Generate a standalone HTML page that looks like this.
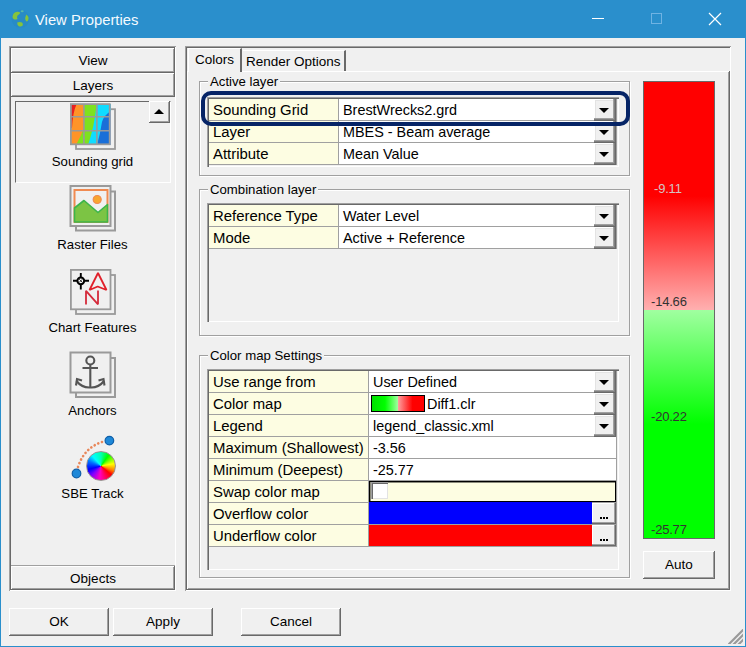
<!DOCTYPE html>
<html><head><meta charset="utf-8">
<style>
*{box-sizing:border-box;margin:0;padding:0}
html,body{width:746px;height:647px;overflow:hidden;background:#f0f0f0;font-family:"Liberation Sans",sans-serif;color:#000}
.a{position:absolute}
.raised{background:#f0f0f0;box-shadow:inset -1px -1px #696969,inset 1px 1px #fff,inset -2px -2px #a0a0a0}
.sunken{box-shadow:inset 1px 1px #a0a0a0,inset -1px -1px #fff,inset 2px 2px #696969}
.t13{font-size:13.5px;line-height:16px;white-space:nowrap}
.t15{font-size:14.8px;line-height:18px;white-space:nowrap}
.ctr{text-align:center}
.gb{border:1px solid #a0a0a0;box-shadow:1px 1px #fff,inset 1px 1px #fff}
.gl{position:absolute;background:#f0f0f0;padding:0 2px 0 2px;font-size:13.2px;line-height:16px;white-space:nowrap}
.grid{position:absolute;background:#f0f0f0}
.row{position:absolute;height:22px}
.lab{background:#fdfde2;border-bottom:1px solid #a0a0a0;border-right:1px solid #a0a0a0;padding-left:4px;font-size:14.9px;white-space:nowrap;overflow:hidden}
.val{background:#fff;border-bottom:1px solid #a0a0a0;border-right:1px solid #a0a0a0;padding-left:4px;font-size:14.4px;white-space:nowrap;overflow:hidden}
.dd{background:#f0f0f0;box-shadow:inset -1px -1px #696969,inset -2px -2px #808080,inset -3px -3px #a0a0a0,inset 1px 1px #fff,inset 2px 2px #e3e3e3}
.tri{position:absolute;left:5px;width:0;height:0;border-left:5px solid transparent;border-right:5px solid transparent;border-top:5px solid #000}
.dotb{background:#f0f0f0;box-shadow:inset -1px -1px #696969,inset -2px -2px #a0a0a0,inset 1px 1px #fff}
.dotb i{position:absolute;left:8px;top:14px;width:2px;height:2px;background:#000;box-shadow:3px 0 #000,6px 0 #000}
.sw{display:inline-block;vertical-align:top;margin-top:2px;margin-left:-2px;margin-right:2px;width:54px;height:17px;border:1px solid #000;background:linear-gradient(90deg,#00e000 0%,#00ff00 25%,#a0ffa0 50%,#ffa0a0 50%,#ff0000 78%,#ff0000 100%)}
</style></head><body>
<!-- window border -->
<div class="a" style="left:0;top:0;width:746px;height:647px;border:1px solid #2a8fcc;border-top:0"></div>
<!-- title bar -->
<div class="a" style="left:0;top:0;width:746px;height:38px;background:#2a8fcc"></div>
<svg class="a" style="left:10px;top:8px" width="22" height="22" viewBox="10 8 22 22">
<circle cx="20.5" cy="18.8" r="9" fill="#288bc6"/>
<path d="M12.5 16.5 Q13 12.5 17 11.8 Q19.5 11.5 20.3 13 Q19 14.5 17.5 15.5 Q16.5 17 17.5 19 Q15 20 13.5 19 Q12.3 18 12.5 16.5 Z" fill="#86c43c"/>
<ellipse cx="22.2" cy="11.3" rx="1.5" ry="1" fill="#5ab8a8"/>
<path d="M26.5 14.5 Q28.8 16.5 28.5 19 Q28 21.5 26.5 21.5 Q25 20.5 25.2 18 Q25.5 16 26.5 14.5 Z" fill="#86c43c"/>
<path d="M17.2 22.5 Q19.5 21.3 22 22.5 Q23.5 24 22.5 25.8 Q20.5 27.2 18.5 26 Q17 24.5 17.2 22.5 Z" fill="#86c43c"/>
</svg>
<div class="a" style="left:35px;top:11px;font-size:14.8px;line-height:18px;color:#f4faff">View Properties</div>
<div class="a" style="left:592px;top:18px;width:12px;height:1px;background:#fff"></div>
<div class="a" style="left:651px;top:13px;width:11px;height:11px;border:1px solid #6fb3e3"></div>
<svg class="a" style="left:708px;top:12px" width="14" height="14" viewBox="0 0 14 14"><path d="M1 1 L13 13 M13 1 L1 13" stroke="#fff" stroke-width="1.2"/></svg>

<!-- left panel -->
<div class="a sunken" style="left:9px;top:46px;width:167px;height:545px"></div>
<div class="a raised t13 ctr" style="left:11px;top:48px;width:164px;height:25px;padding-top:5px">View</div>
<div class="a raised t13 ctr" style="left:11px;top:73px;width:164px;height:24px;padding-top:5px">Layers</div>
<div class="a" style="left:11px;top:565px;width:164px;height:1px;background:#a0a0a0"></div>
<div class="a raised t13 ctr" style="left:11px;top:566px;width:164px;height:24px;padding-top:5px">Objects</div>
<!-- selected item frame -->
<div class="a" style="left:15px;top:101px;width:156px;height:82px;border-top:1px solid #696969;border-left:1px solid #696969;border-right:1px solid #fff;border-bottom:1px solid #fff"></div>
<div class="a raised" style="left:149px;top:101px;width:21px;height:22px"></div>
<div class="a" style="left:153.5px;top:109px;width:0;height:0;border-left:5px solid transparent;border-right:5px solid transparent;border-bottom:5px solid #000"></div>

<div class="a t13 ctr" style="left:10px;top:154px;width:165px;font-size:13.2px">Sounding grid</div>
<div class="a t13 ctr" style="left:10px;top:237px;width:165px;font-size:13.2px">Raster Files</div>
<div class="a t13 ctr" style="left:10px;top:320px;width:165px;font-size:13.2px">Chart Features</div>
<div class="a t13 ctr" style="left:10px;top:403px;width:165px;font-size:13.2px">Anchors</div>
<div class="a t13 ctr" style="left:10px;top:486px;width:165px;font-size:13.2px">SBE Track</div>

<!-- right tab control -->
<div class="a sunken" style="left:185px;top:46px;width:546px;height:545px"></div>
<div class="a raised" style="left:187px;top:71px;width:543px;height:519px"></div>
<!-- tabs -->
<div class="a" style="left:188px;top:48px;width:54px;height:24px;background:#f0f0f0;border-left:1px solid #fff;border-top:1px solid #fff;border-right:2px solid #696969"></div>
<div class="a t13" style="left:195px;top:52px">Colors</div>
<div class="a" style="left:243px;top:50px;width:103px;height:21px;border-top:1px solid #fff;border-right:2px solid #696969"></div>
<div class="a t13" style="left:246px;top:54px">Render Options</div>

<!-- group boxes -->
<div class="a gb" style="left:199px;top:81px;width:431px;height:95px"></div>
<div class="gl" style="left:208px;top:74px">Active layer</div>
<div class="a gb" style="left:199px;top:189px;width:431px;height:147px"></div>
<div class="gl" style="left:208px;top:182px">Combination layer</div>
<div class="a gb" style="left:199px;top:355px;width:431px;height:223px"></div>
<div class="gl" style="left:208px;top:348px">Color map Settings</div>

<!-- GRIDS -->
<div class="a" style="left:207px;top:97px;width:412px;height:70px;background:#f0f0f0;box-shadow:inset 1px 1px #a0a0a0,inset 2px 2px #696969,inset -1px -1px #fff"></div>
<div class="a lab" style="left:209px;top:99px;width:130px;height:22px;line-height:22px">Sounding Grid</div>
<div class="a val" style="left:339px;top:99px;width:278px;height:22px;line-height:22px">BrestWrecks2.grd</div>
<div class="a dd" style="left:594px;top:99px;width:22px;height:22px"><div class="tri" style="top:9px"></div></div>
<div class="a lab" style="left:209px;top:121px;width:130px;height:22px;line-height:22px">Layer</div>
<div class="a val" style="left:339px;top:121px;width:278px;height:22px;line-height:22px">MBES - Beam average</div>
<div class="a dd" style="left:594px;top:121px;width:22px;height:22px"><div class="tri" style="top:9px"></div></div>
<div class="a lab" style="left:209px;top:143px;width:130px;height:22px;line-height:22px">Attribute</div>
<div class="a val" style="left:339px;top:143px;width:278px;height:22px;line-height:22px">Mean Value</div>
<div class="a dd" style="left:594px;top:143px;width:22px;height:22px"><div class="tri" style="top:9px"></div></div>
<div class="a" style="left:207px;top:203px;width:412px;height:119px;background:#f0f0f0;box-shadow:inset 1px 1px #a0a0a0,inset 2px 2px #696969,inset -1px -1px #fff"></div>
<div class="a lab" style="left:209px;top:205px;width:130px;height:22px;line-height:22px">Reference Type</div>
<div class="a val" style="left:339px;top:205px;width:278px;height:22px;line-height:22px">Water Level</div>
<div class="a dd" style="left:594px;top:205px;width:22px;height:22px"><div class="tri" style="top:9px"></div></div>
<div class="a lab" style="left:209px;top:227px;width:130px;height:22px;line-height:22px">Mode</div>
<div class="a val" style="left:339px;top:227px;width:278px;height:22px;line-height:22px">Active + Reference</div>
<div class="a dd" style="left:594px;top:227px;width:22px;height:22px"><div class="tri" style="top:9px"></div></div>
<div class="a" style="left:207px;top:369px;width:412px;height:201px;background:#f0f0f0;box-shadow:inset 1px 1px #a0a0a0,inset 2px 2px #696969,inset -1px -1px #fff"></div>
<div class="a lab" style="left:209px;top:371px;width:160px;height:22px;line-height:22px">Use range from</div>
<div class="a val" style="left:369px;top:371px;width:248px;height:22px;line-height:22px">User Defined</div>
<div class="a dd" style="left:594px;top:371px;width:22px;height:22px"><div class="tri" style="top:9px"></div></div>
<div class="a lab" style="left:209px;top:393px;width:160px;height:22px;line-height:22px">Color map</div>
<div class="a val" style="left:369px;top:393px;width:248px;height:22px;line-height:22px"><span class="sw"></span>Diff1.clr</div>
<div class="a dd" style="left:594px;top:393px;width:22px;height:22px"><div class="tri" style="top:9px"></div></div>
<div class="a lab" style="left:209px;top:415px;width:160px;height:22px;line-height:22px">Legend</div>
<div class="a val" style="left:369px;top:415px;width:248px;height:22px;line-height:22px">legend_classic.xml</div>
<div class="a dd" style="left:594px;top:415px;width:22px;height:22px"><div class="tri" style="top:9px"></div></div>
<div class="a lab" style="left:209px;top:437px;width:160px;height:22px;line-height:22px">Maximum (Shallowest)</div>
<div class="a val" style="left:369px;top:437px;width:248px;height:22px;line-height:22px">-3.56</div>
<div class="a lab" style="left:209px;top:459px;width:160px;height:22px;line-height:22px">Minimum (Deepest)</div>
<div class="a val" style="left:369px;top:459px;width:248px;height:22px;line-height:22px">-25.77</div>
<div class="a lab" style="left:209px;top:481px;width:160px;height:22px;line-height:22px">Swap color map</div>
<div class="a val" style="left:369px;top:481px;width:248px;height:22px;background:#fdfde2"></div>
<div class="a" style="left:369px;top:481px;width:247px;height:21px;border:1px solid #000;box-shadow:inset 1px 1px rgba(0,0,0,.45)"></div>
<div class="a" style="left:371px;top:482px;width:17px;height:17px;background:#fff;box-shadow:inset 1px 1px #a0a0a0,inset 2px 2px #696969,inset -1px -1px #e3e3e3"></div>
<div class="a lab" style="left:209px;top:503px;width:160px;height:22px;line-height:22px">Overflow color</div>
<div class="a val" style="left:369px;top:503px;width:248px;height:22px;background:#f0f0f0"></div>
<div class="a" style="left:369px;top:502px;width:223px;height:22px;background:#0000ff"></div>
<div class="a dotb" style="left:592px;top:503px;width:24px;height:21px"><i></i></div>
<div class="a lab" style="left:209px;top:525px;width:160px;height:22px;line-height:22px">Underflow color</div>
<div class="a val" style="left:369px;top:525px;width:248px;height:22px;background:#f0f0f0"></div>
<div class="a" style="left:369px;top:525px;width:223px;height:21px;background:#ff0000"></div>
<div class="a dotb" style="left:592px;top:525px;width:24px;height:21px"><i></i></div>
<!-- /GRIDS -->
<!-- color bar -->
<div class="a" style="left:643px;top:81px;width:72px;height:458px;border:1px solid #696969;background:linear-gradient(#f00 0%,#f00 25%,#ffb0b0 50%,#a0ffa0 50%,#00ff00 75%,#00ff00 100%)"></div>
<div class="a raised t13 ctr" style="left:643px;top:551px;width:72px;height:28px;padding-top:6px">Auto</div>

<!-- bottom buttons -->
<div class="a raised t13 ctr" style="left:9px;top:608px;width:100px;height:28px;padding-top:6px">OK</div>
<div class="a raised t13 ctr" style="left:113px;top:608px;width:100px;height:28px;padding-top:6px">Apply</div>
<div class="a raised t13 ctr" style="left:241px;top:608px;width:100px;height:28px;padding-top:6px">Cancel</div>
<!-- ICONS -->
<svg class="a" style="left:0;top:0" width="180" height="600" viewBox="0 0 180 600">
<defs><clipPath id="cp1"><rect x="71" y="104" width="39.5" height="41"/></clipPath></defs>
<!-- sounding grid icon -->
<rect x="76" y="109.2" width="39" height="39.8" fill="none" stroke="#9a9a9a" stroke-width="1.8"/>
<rect x="70" y="103" width="41" height="42" fill="#f0f0f0"/>
<g clip-path="url(#cp1)">
<rect x="70" y="103" width="41" height="42" fill="#1a6fd8"/>
<path d="M60 100 L111 100 L111 111 Q104 115 102 122 Q100 135 97 145 L60 145 Z" fill="#10dcff"/>
<path d="M60 100 L97 100 Q95 125 88 145 L60 145 Z" fill="#7ee21e"/>
<path d="M60 100 L84 100 L84 128 Q80 138 76 145 L60 145 Z" fill="#ff9428"/>
<path d="M60 100 L79 100 Q73 108 72 128 L60 128 Z" fill="#e82020"/>
</g>
<rect x="70.9" y="104.1" width="38.8" height="40.2" fill="none" stroke="#9a9a9a" stroke-width="1.8"/>
<path d="M83.9 104 V144 M96.9 104 V144 M71 116.8 H110 M71 130.7 H110" stroke="#9a9a9a" stroke-width="1.6"/>
<!-- raster icon -->
<rect x="76" y="191.5" width="39" height="39" fill="none" stroke="#9a9a9a" stroke-width="2"/>
<rect x="70.5" y="186" width="40" height="40" fill="#f0f0f0" stroke="#9a9a9a" stroke-width="2"/>
<rect x="74.5" y="190" width="33" height="32" fill="#f0f0f0" stroke="#f08a50" stroke-width="2"/>
<path d="M74.5 208 L84 200.5 L98 212.5 L107.5 204.5 V222 H74.5 Z" fill="#7cc444" stroke="#3db54a" stroke-width="1.6" stroke-linejoin="round"/>
<circle cx="97.2" cy="199.5" r="4" fill="#f8a630" stroke="#f08a50" stroke-width="1.2"/>
<!-- chart features icon -->
<rect x="76" y="275" width="39" height="39" fill="none" stroke="#9a9a9a" stroke-width="1.8"/>
<rect x="70.9" y="269.9" width="39.6" height="39.4" fill="#f0f0f0" stroke="#9a9a9a" stroke-width="1.8"/>
<circle cx="80.8" cy="280.8" r="3.4" fill="#fff" stroke="#000" stroke-width="2"/>
<path d="M79.2 279.2 L82.4 282.4 M82.4 279.2 L79.2 282.4" stroke="#333" stroke-width="1"/>
<path d="M73 280.8 H77.5 M84 280.8 H89 M80.8 273 V277.5 M80.8 284 V289.5" stroke="#000" stroke-width="1.9"/>
<path d="M98 273 L89.5 290 L97.7 286.5 L106.5 290 Z" fill="none" stroke="#e0202a" stroke-width="1.8" stroke-linejoin="bevel"/>
<path d="M86 304.5 V290.8 L98 304.3 V290.5" fill="none" stroke="#d42a3a" stroke-width="1.8" stroke-linejoin="bevel"/>
<!-- anchors icon -->
<rect x="76" y="358" width="39" height="39" fill="none" stroke="#9a9a9a" stroke-width="2"/>
<rect x="70.5" y="352.5" width="40" height="40" fill="#f0f0f0" stroke="#9a9a9a" stroke-width="2"/>
<g stroke="#555" stroke-width="2.1" fill="none">
<circle cx="90.3" cy="360.5" r="4"/>
<path d="M82.5 368 H98 M90.3 364.5 V387.5"/>
<path d="M76.5 381 Q82 388 90.3 387.5 Q98.5 388 104 381"/>
<path d="M76 385.5 L77 379 L82 380.5 M104.5 385.5 L103.5 379 L98.5 380.5"/>
</g>
<!-- SBE track icon -->
<path d="M78 467 Q84 448 102 442" fill="none" stroke="#e8875a" stroke-width="2.6" stroke-dasharray="0.1 3.9" stroke-linecap="round"/>
<circle cx="109.4" cy="440.6" r="4.3" fill="#1e88d8" stroke="#0f5fa8" stroke-width="1.2"/>
<circle cx="76.5" cy="473.5" r="4.3" fill="#1e88d8" stroke="#0f5fa8" stroke-width="1.2"/>
</svg>
<div class="a" style="left:86px;top:451px;width:30px;height:30px;border-radius:50%;border:1.5px solid #9a9090;background:conic-gradient(#00ffb0 0deg,#00ff00 35deg,#ffff00 80deg,#ff8000 110deg,#ff0000 130deg,#ff00c0 185deg,#8000ff 225deg,#0000ff 255deg,#0070ff 290deg,#00ffff 320deg,#00ffb0 360deg)"></div>
<!-- /ICONS -->
<!-- EXTRA -->
<div class="a" style="left:201px;top:91px;width:429px;height:35px;border:4px solid #062466;border-radius:10px"></div>
<div class="a" style="left:654px;top:181px;font-size:13px;line-height:16px;color:#d4c4c4;letter-spacing:-0.2px">-9.11</div>
<div class="a" style="left:651px;top:294px;font-size:13px;line-height:16px;color:#333;letter-spacing:-0.2px">-14.66</div>
<div class="a" style="left:651px;top:409px;font-size:13px;line-height:16px;color:#333;letter-spacing:-0.2px">-20.22</div>
<div class="a" style="left:651px;top:522px;font-size:13px;line-height:16px;color:#333;letter-spacing:-0.2px">-25.77</div>
<svg class="a" style="left:728px;top:629px" width="16" height="16" viewBox="728 629 16 16"><defs><clipPath id="gc"><rect x="728" y="629" width="15" height="15"/></clipPath></defs><g clip-path="url(#gc)" stroke="#9a9a9a" stroke-width="2.2"><path d="M744 629 L728 645 M744 634 L733 645 M744 639 L738 645"/></g></svg>
<!-- /EXTRA -->
</body></html>
